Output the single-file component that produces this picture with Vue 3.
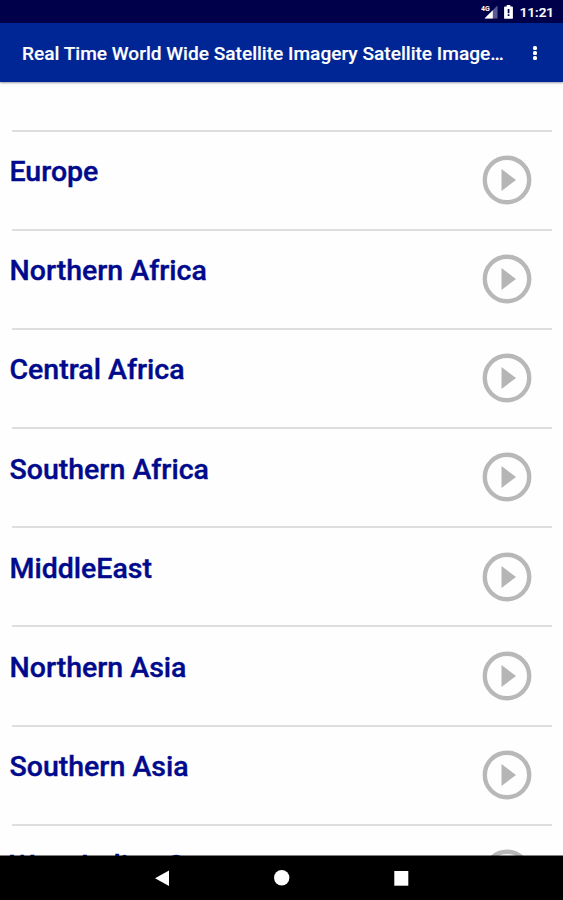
<template>
  <div class="screen">
    <div class="status">
      <svg class="status__signal" viewBox="0 0 17 16" aria-hidden="true">
        <path fill="#5a5a94" d="M16.5 1.5v13h-13z" />
        <path fill="#ffffff" d="M11.8 6.2v8.3H3.5z" />
        <rect x="0" y="1" width="9" height="6.3" fill="#00004a" />
        <text x="0" y="6.8" fill="#ffffff" font-size="7" font-weight="700">4G</text>
      </svg>
      <svg class="status__battery" viewBox="0 0 9 14" aria-hidden="true">
        <path fill="#ffffff" d="M2.7 0h3.6v1.4H8c.5 0 .9.4.9.9v10.6c0 .5-.4.9-.9.9H1a.9.9 0 0 1-.9-.9V2.3c0-.5.4-.9.9-.9h1.7z" />
        <path fill="#00004a" d="M3.7 4h1.7v4.2H3.7zM3.7 9.3h1.7v1.6H3.7z" />
      </svg>
      <span class="status__time">11:21</span>
    </div>

    <header class="toolbar">
      <h1 class="toolbar__title">{{ title }}</h1>
      <button class="toolbar__menu" aria-label="More options">
        <i></i><i></i><i></i>
      </button>
    </header>

    <main class="content">
      <ul class="regions">
        <li v-for="region in regions" :key="region" class="region">
          <span class="region__name">{{ region }}</span>
          <svg class="region__play" viewBox="0 0 50 50" aria-hidden="true">
            <circle cx="25" cy="25" r="22.2" fill="none" stroke="#b8b8b8" stroke-width="4.4" />
            <path fill="#b5b5b5" d="M19.5 14v22L34 25z" />
          </svg>
        </li>
      </ul>
    </main>

    <nav class="navbar">
      <svg viewBox="0 0 16 16"><path fill="#ffffff" d="M15 .5V16L1 8.2z" /></svg>
      <svg viewBox="0 0 16 16"><circle cx="7.7" cy="7.8" r="7.7" fill="#ffffff" /></svg>
      <svg viewBox="0 0 16 16"><rect x="1.3" y="1" width="14" height="14.7" fill="#ffffff" /></svg>
    </nav>
  </div>
</template>

<script setup>
const title = 'Real Time World Wide Satellite Imagery Satellite Image…'

const regions = [
  'Europe',
  'Northern Africa',
  'Central Africa',
  'Southern Africa',
  'MiddleEast',
  'Northern Asia',
  'Southern Asia',
  'West Indian Ocean'
]
</script>

<style>
body { margin: 0; background: #ffffff; }
</style>

<style scoped>
.screen { height: 900px; display: flex; flex-direction: column; overflow: hidden; background: #fefefe; font-family: Roboto, 'Liberation Sans', sans-serif; }

/* --- STATUS BAR --- */
.status { flex: none; height: 23px; box-sizing: border-box; padding: 1px 9px 0 0; display: flex; align-items: center; justify-content: flex-end; background: #00004a; color: #ffffff; }
.status__signal { width: 17px; height: 16px; margin-right: 6px; }
.status__battery { width: 9px; height: 14px; margin-right: 7px; }
.status__time { font-size: 13.5px; font-weight: 500; line-height: 22px; -webkit-text-stroke: 0.2px #ffffff; }

/* --- TOOLBAR --- */
.toolbar { flex: none; height: 59px; box-sizing: border-box; padding: 0 22px; display: flex; align-items: center; background: #002696; color: #ffffff; box-shadow: 0 1px 2px rgba(0, 0, 40, 0.4); z-index: 1; }
.toolbar__title { flex: none; width: 484px; margin: 0; padding-top: 2px; font-size: 19.1px; line-height: 26px; font-weight: 500; -webkit-text-stroke: 0.15px #ffffff; white-space: nowrap; overflow: hidden; }
.toolbar__menu { width: 14px; margin-left: 22px; padding: 0; border: 0; background: none; display: flex; flex-direction: column; align-items: center; gap: 1px; }
.toolbar__menu i { width: 4px; height: 4px; border-radius: 1.5px; background: #ffffff; }

/* --- LIST --- */
.content { flex: 1; min-height: 0; overflow: hidden; padding: 48px 11.5px 0; }
.regions { list-style: none; margin: 0; padding: 0; }
.region { height: 99.1px; box-sizing: border-box; border-top: 2px solid #dedede; padding-right: 20px; display: flex; justify-content: space-between; align-items: flex-start; }
.region__name { margin: 23.3px 0 0 -2px; font-size: 28.5px; line-height: 34px; font-weight: 500; color: #000a8c; -webkit-text-stroke: 0.4px #000a8c; white-space: nowrap; }
.region__play { flex: none; width: 50px; height: 50px; margin-top: 23.2px; }

/* --- NAVIGATION BAR --- */
.navbar { flex: none; height: 44px; display: flex; justify-content: center; align-items: center; gap: 103.5px; background: #000000; box-shadow: 0 -1px 0 rgba(0, 0, 0, 0.5); z-index: 1; }
.navbar svg { width: 16px; height: 16px; }
</style>
